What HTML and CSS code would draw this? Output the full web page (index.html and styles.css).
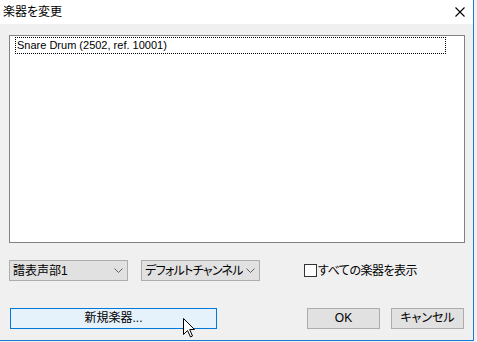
FILE: index.html
```html
<!DOCTYPE html>
<html lang="ja">
<head>
<meta charset="utf-8">
<title>楽器を変更</title>
<link rel="stylesheet" href="styles.css">
</head>
<body>
<div class="dialog">
  <div class="titlebar">
    <span class="title">楽器を変更</span>
    <svg class="close" width="10" height="10" viewBox="0 0 10 10"><path d="M0.5 0.5 L9.5 9.5 M9.5 0.5 L0.5 9.5" stroke="#000" stroke-width="1.1" fill="none"/></svg>
  </div>
  <div class="content">
    <div class="list">
      <div class="item">Snare Drum (2502, ref. 10001)</div>
    </div>
    <div class="controls">
      <div class="combo c1"><span class="ctext">譜表声部1</span><svg class="chev" width="9" height="5" viewBox="0 0 9 5"><path d="M0.5 0.5 L4.5 4.5 L8.5 0.5" stroke="#606060" fill="none"/></svg></div>
      <div class="combo c2"><span class="ctext tight">デフォルトチャンネル</span><svg class="chev" width="9" height="5" viewBox="0 0 9 5"><path d="M0.5 0.5 L4.5 4.5 L8.5 0.5" stroke="#606060" fill="none"/></svg></div>
      <label class="check"><span class="box"></span><span class="clabel">すべての楽器を表示</span></label>
    </div>
    <div class="buttons">
      <button class="btn new">新規楽器...</button>
      <button class="btn ok">OK</button>
      <button class="btn cancel">キャンセル</button>
    </div>
  </div>
  <svg class="cursor" width="13" height="20" viewBox="0 0 13 20"><path d="M0.5 0.5 L0.5 16.5 L4.5 12.5 L7.5 19 L9.5 18 L6.7 11.5 L11.5 11.5 Z" fill="#fff" stroke="#000" stroke-width="1" stroke-linejoin="miter"/></svg>
</div>
</body>
</html>
```
FILE: styles.css
```css
html, body {
  margin: 0;
  padding: 0;
  background: #f0f0f0;
}
body {
  font-family: "Liberation Sans", "Noto Sans CJK JP", sans-serif;
  font-size: 12px;
  color: #000;
  font-feature-settings: "palt";
}
.dialog {
  position: relative;
  width: 473px;
  height: 340px;
  border-right: 1px solid #1a7ad3;
  border-bottom: 1px solid #1a7ad3;
  background: #f0f0f0;
}
.titlebar {
  height: 24px;
  background: #fff;
  display: flex;
  align-items: center;
  padding-left: 3px;
  padding-bottom: 2px;
  box-sizing: border-box;
}
.title {
  font-family: "Noto Sans CJK JP", sans-serif;
  font-size: 12px;
  line-height: 14px;
}
.close {
  margin-left: auto;
  margin-right: 8px;
  margin-top: 1px;
}
.content {
  padding: 11px 0 0 9px;
}
.list {
  width: 456px;
  height: 208px;
  box-sizing: border-box;
  border: 1px solid #828282;
  background: #fff;
  padding: 1px 0 0 5px;
}
.item {
  width: 431px;
  height: 17px;
  box-sizing: border-box;
  border: 1px dotted #000;
  padding-left: 1px;
  font-size: 11px;
  line-height: 15px;
  font-family: "Liberation Sans", "DejaVu Sans", sans-serif;
}
.controls {
  display: flex;
  align-items: center;
  margin-top: 17px;
  height: 21px;
}
.combo {
  width: 119px;
  height: 21px;
  box-sizing: border-box;
  border: 1px solid #adadad;
  background: #e1e1e1;
  display: flex;
  align-items: center;
  padding: 0 4px 0 3px;
}
.c2 {
  margin-left: 13px;
}
.ctext {
  line-height: 14px;
  white-space: nowrap;
  overflow: hidden;
  min-width: 0;
  flex: 0 1 auto;
}
.tight {
  letter-spacing: -0.7px;
}
.chev {
  margin-left: auto;
  flex: none;
}
.check {
  margin-left: 44px;
  display: flex;
  align-items: center;
}
.box {
  width: 13px;
  height: 13px;
  box-sizing: border-box;
  border: 1px solid #333;
  background: #fff;
}
.clabel {
  margin-left: 1px;
  line-height: 14px;
  letter-spacing: -0.5px;
}
.buttons {
  display: flex;
  margin-top: 27px;
  margin-left: 1px;
}
.btn {
  height: 21px;
  box-sizing: border-box;
  border: 1px solid #adadad;
  background: #e1e1e1;
  font: inherit;
  color: #000;
  padding: 0;
  line-height: 17px;
}
.new {
  width: 207px;
  border-color: #0078d7;
  background: #e5f1fb;
}
.ok {
  width: 73px;
  margin-left: 90px;
}
.cancel {
  width: 73px;
  margin-left: 11px;
}
.cursor {
  position: absolute;
  left: 183px;
  top: 318px;
}
```
